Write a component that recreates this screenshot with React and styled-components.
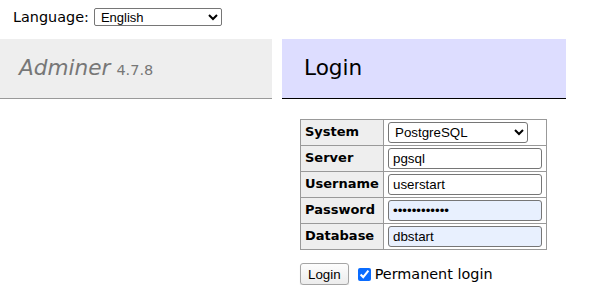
import React from 'react';
import styled, {createGlobalStyle} from 'styled-components';

const GlobalStyle = createGlobalStyle`
   body {
      margin: 0;
      background: #fff;
      color: #000;
      font-family: "DejaVu Sans", Verdana, sans-serif;
      font-size: 14.4px;
      line-height: 1.25;
   }
`;

const LangBar = styled.form`
   display: flex;
   align-items: center;
   gap: 5px;
   height: 18px;
   padding: 8px 13px 13px;
   label {
      line-height: 18px;
   }
`;

const LangSelect = styled.select`
   width: 128px;
   height: 18px;
   padding: 0 2px;
   border: 1px solid #767676;
   border-radius: 2px;
   background: #fff;
   font-family: "Liberation Sans", Arial, sans-serif;
   font-size: 13px;
   color: #000;
`;

const Main = styled.div`
   display: flex;
   gap: 10px;
   align-items: flex-start;
`;

const Menu = styled.div`
   width: 272px;
`;

const Content = styled.div`
   width: 284px;
`;

const Heading = styled.div`
   display: flex;
   align-items: center;
   height: 59px;
   padding-left: ${props => props.$indent}px;
   background: ${props => props.$bg};
   border-bottom: 1px solid ${props => props.$line};
   font-size: 21.6px;
   font-weight: normal;
   white-space: nowrap;
`;

const Brand = styled.span`
   color: #777;
   font-style: italic;
`;

const Version = styled.span`
   color: #777;
   font-size: 14.5px;
   margin-left: 6px;
   margin-top: 4px;
`;

const LoginForm = styled.form`
   padding: 20px 0 0 18px;
`;

const Table = styled.table`
   border-spacing: 0;
   border-top: 1px solid #999;
   border-left: 1px solid #999;
   th, td {
      height: 25px;
      padding: 0 4px;
      border-right: 1px solid #999;
      border-bottom: 1px solid #999;
   }
   th {
      width: 74px;
      background: #eee;
      text-align: left;
      font-size: 13px;
      font-weight: bold;
   }
   td {
      width: 154px;
   }
`;

const Field = styled.input`
   display: block;
   box-sizing: border-box;
   width: 154px;
   height: 21px;
   margin: 0;
   padding: 0 4px;
   border: 1px solid #767676;
   border-radius: 3px;
   background: ${props => (props.$filled ? '#e8f0fe' : '#fff')};
   font-family: "Liberation Sans", Arial, sans-serif;
   font-size: 13.33px;
   color: #000;
`;

const SystemSelect = styled.select`
   display: block;
   box-sizing: border-box;
   width: 140px;
   height: 21px;
   margin: 0;
   padding: 0 2px;
   border: 1px solid #767676;
   border-radius: 3px;
   background: #fff;
   font-family: "Liberation Sans", Arial, sans-serif;
   font-size: 13.33px;
   color: #000;
`;

const Actions = styled.p`
   display: flex;
   align-items: center;
   margin: 13px 0 0;
   label {
      display: flex;
      align-items: center;
      gap: 4px;
      margin-left: 9px;
   }
   input[type="checkbox"] {
      width: 13px;
      height: 13px;
      margin: 0;
      accent-color: #0a6cff;
   }
`;

const Button = styled.button`
   height: 22px;
   padding: 0 7px;
   border: 1px solid #a5a5a5;
   border-radius: 3px;
   background: linear-gradient(#fdfdfd, #ececec);
   box-shadow: 0 1px 1px rgba(0, 0, 0, 0.15);
   font-family: "Liberation Sans", Arial, sans-serif;
   font-size: 13.33px;
   color: #000;
`;

const rows = [
   {label: 'Server', value: 'pgsql'},
   {label: 'Username', value: 'userstart'},
   {label: 'Password', value: 'passwordxxxx', type: 'password', filled: true},
   {label: 'Database', value: 'dbstart', filled: true},
];

const App = () => {
   return (
      <>
         <GlobalStyle />
         <LangBar>
            <label>Language:</label>
            <LangSelect defaultValue='en'>
               <option value='en'>English</option>
            </LangSelect>
         </LangBar>
         <Main>
            <Menu>
               <Heading $indent={19} $bg='#eee' $line='#999'>
                  <Brand>Adminer</Brand>
                  <Version>4.7.8</Version>
               </Heading>
            </Menu>
            <Content>
               <Heading $indent={22} $bg='#ddf' $line='#000'>Login</Heading>
               <LoginForm onSubmit={e => e.preventDefault()}>
                  <Table>
                     <tbody>
                        <tr>
                           <th>System</th>
                           <td>
                              <SystemSelect defaultValue='pgsql'>
                                 <option value='pgsql'>PostgreSQL</option>
                              </SystemSelect>
                           </td>
                        </tr>
                        {rows.map(row => (
                           <tr key={row.label}>
                              <th>{row.label}</th>
                              <td>
                                 <Field
                                    type={row.type || 'text'}
                                    defaultValue={row.value}
                                    $filled={row.filled}
                                 />
                              </td>
                           </tr>
                        ))}
                     </tbody>
                  </Table>
                  <Actions>
                     <Button type='submit'>Login</Button>
                     <label>
                        <input type='checkbox' defaultChecked />
                        Permanent login
                     </label>
                  </Actions>
               </LoginForm>
            </Content>
         </Main>
      </>
   );
};

export default App;
